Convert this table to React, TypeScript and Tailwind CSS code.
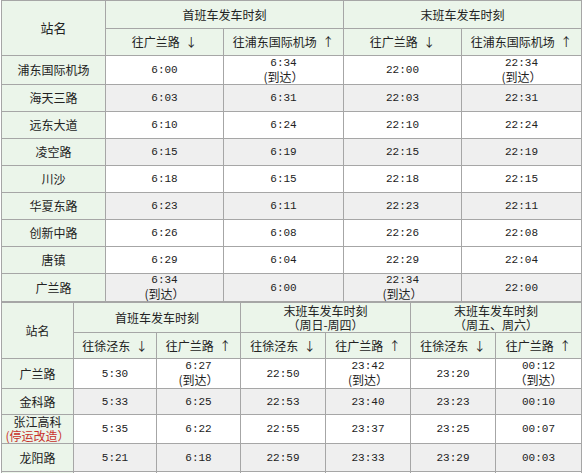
import React from "react";

const F = { fontFamily: '"Noto Sans CJK SC", "Noto Sans", sans-serif' };

function C({ children, className = "" }: { children?: React.ReactNode; className?: string }) {
  return (
    <div className={`flex flex-col items-center justify-center text-center text-[12px] leading-[14px] text-[#222] ${className}`}>
      {children}
    </div>
  );
}

function T({ v }: { v: string }) {
  const parts = v.split("|");
  if (parts.length === 1) return <span className="font-['Liberation_Mono'] text-[11px]">{v}</span>;
  return (
    <>
      <span className="font-['Liberation_Mono'] text-[11px] leading-[13px]">{parts[0]}</span>
      <span className="leading-[14px]">{parts[1]}</span>
    </>
  );
}

const topRows: { name: string; v: string[]; bg: string }[] = [
  { name: "浦东国际机场", v: ["6:00", "6:34|(到达）", "22:00", "22:34|(到达）"], bg: "bg-white" },
  { name: "海天三路", v: ["6:03", "6:31", "22:03", "22:31"], bg: "bg-[#efefef]" },
  { name: "远东大道", v: ["6:10", "6:24", "22:10", "22:24"], bg: "bg-white" },
  { name: "凌空路", v: ["6:15", "6:19", "22:15", "22:19"], bg: "bg-[#efefef]" },
  { name: "川沙", v: ["6:18", "6:15", "22:18", "22:15"], bg: "bg-white" },
  { name: "华夏东路", v: ["6:23", "6:11", "22:23", "22:11"], bg: "bg-[#efefef]" },
  { name: "创新中路", v: ["6:26", "6:08", "22:26", "22:08"], bg: "bg-white" },
  { name: "唐镇", v: ["6:29", "6:04", "22:29", "22:04"], bg: "bg-white" },
  { name: "广兰路", v: ["6:34|(到达）", "6:00", "22:34|(到达）", "22:00"], bg: "bg-[#efefef]" },
];

const botRows: { name: React.ReactNode; v: string[]; bg: string }[] = [
  { name: "广兰路", v: ["5:30", "6:27|(到达）", "22:50", "23:42|(到达）", "23:20", "00:12|（到达）"], bg: "bg-white" },
  { name: "金科路", v: ["5:33", "6:25", "22:53", "23:40", "23:23", "00:10"], bg: "bg-[#efefef]" },
  {
    name: (
      <>
        <span>张江高科</span>
        <span className="text-[#c8312a]">(停运改造）</span>
      </>
    ),
    v: ["5:35", "6:22", "22:55", "23:37", "23:25", "00:07"],
    bg: "bg-white",
  },
  { name: "龙阳路", v: ["5:21", "6:18", "22:59", "23:33", "23:29", "00:03"], bg: "bg-[#efefef]" },
  { name: "", v: ["", "", "", "", "", ""], bg: "bg-white" },
];

const G = "bg-[#ebf5ea]";

export default function App() {
  return (
    <div className="bg-white w-[582px] h-[473px] overflow-hidden" style={F}>
      <div className="ml-px w-[581px] grid grid-cols-[103px_117px_119px_117px_119px] grid-rows-[27px_26px_28px_26px_26px_26px_26px_26px_26px_26px_27px] gap-px p-px bg-[#a6a6a6]">
        <C className={`${G} row-span-2 text-[13px]`}>站名</C>
        <C className={`${G} col-span-2`}>首班车发车时刻</C>
        <C className={`${G} col-span-2`}>末班车发车时刻</C>
        <C className={G}>往广兰路 &nbsp;↓</C>
        <C className={G}>往浦东国际机场 &nbsp;↑</C>
        <C className={G}>往广兰路 &nbsp;↓</C>
        <C className={G}>往浦东国际机场 &nbsp;↑</C>
        {topRows.map((r) => (
          <React.Fragment key={r.name}>
            <C className={G}>{r.name}</C>
            {r.v.map((v, i) => (
              <C key={i} className={r.bg}>
                <T v={v} />
              </C>
            ))}
          </React.Fragment>
        ))}
      </div>
      <div className="ml-px w-[581px] grid grid-cols-[71px_82px_83px_84px_84px_84px_85px] grid-rows-[29px_25px_29px_25px_28px_27px_26px] gap-px p-px bg-[#a6a6a6]">
        <C className={`${G} row-span-2`}>站名</C>
        <C className={`${G} col-span-2`}>首班车发车时刻</C>
        <C className={`${G} col-span-2`}>
          <span>末班车发车时刻</span>
          <span>（周日-周四）</span>
        </C>
        <C className={`${G} col-span-2`}>
          <span>末班车发车时刻</span>
          <span>（周五、周六）</span>
        </C>
        {[0, 1, 2].map((k) => (
          <React.Fragment key={k}>
            <C className={G}>往徐泾东 &nbsp;↓</C>
            <C className={G}>往广兰路 &nbsp;↑</C>
          </React.Fragment>
        ))}
        {botRows.map((r, idx) => (
          <React.Fragment key={idx}>
            <C className={G}>{r.name}</C>
            {r.v.map((v, i) => (
              <C key={i} className={r.bg}>
                <T v={v} />
              </C>
            ))}
          </React.Fragment>
        ))}
      </div>
    </div>
  );
}
